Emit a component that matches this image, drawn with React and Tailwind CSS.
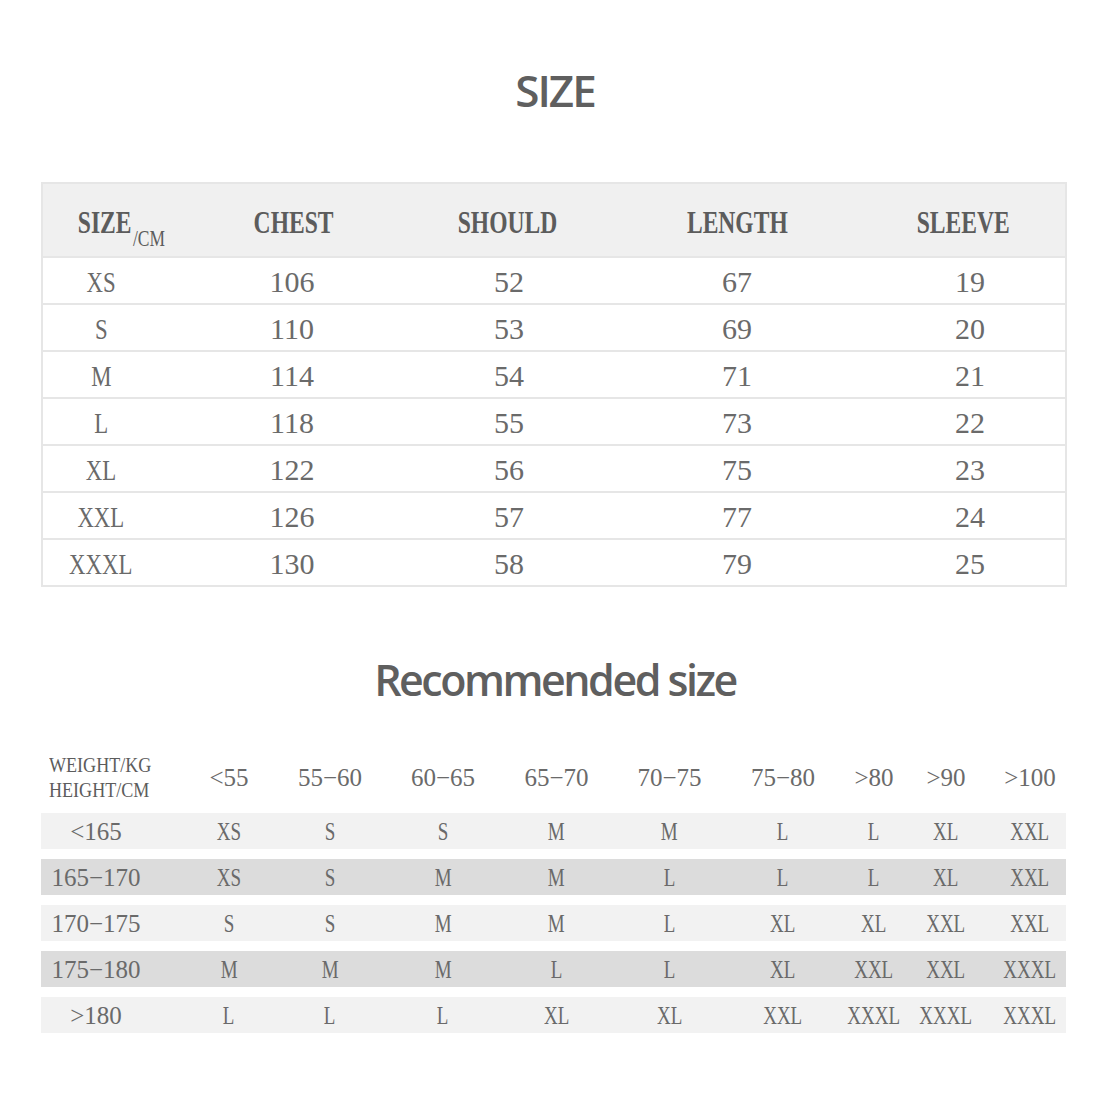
import React from "react";

const sizeRows = [
  ["XS", "106", "52", "67", "19"],
  ["S", "110", "53", "69", "20"],
  ["M", "114", "54", "71", "21"],
  ["L", "118", "55", "73", "22"],
  ["XL", "122", "56", "75", "23"],
  ["XXL", "126", "57", "77", "24"],
  ["XXXL", "130", "58", "79", "25"],
];

const recHeaders = ["<55", "55−60", "60−65", "65−70", "70−75", "75−80", ">80", ">90", ">100"];
const recRows = [
  ["<165", "XS", "S", "S", "M", "M", "L", "L", "XL", "XXL"],
  ["165−170", "XS", "S", "M", "M", "L", "L", "L", "XL", "XXL"],
  ["170−175", "S", "S", "M", "M", "L", "XL", "XL", "XXL", "XXL"],
  ["175−180", "M", "M", "M", "L", "L", "XL", "XXL", "XXL", "XXXL"],
  [">180", "L", "L", "L", "XL", "XL", "XXL", "XXXL", "XXXL", "XXXL"],
];

const t1Cols = "grid-cols-[154px_203px_222px_230px_213px]";
const t1DataPad = ["pr-[38px]", "pr-[13px]", "pr-[4px]", "", "pl-[23px]"];
const t1HeadPad = ["pl-[2px]", "pr-[9px]", "pr-[8px]", "", "pl-[9px]"];
const t2Pad = ["pr-[11px]", "pl-[16px]", "pr-[6px]", "", "", "", "pl-[12px]", "pl-[10px]", "pr-[6px]", "pl-[6px]"];
const t2Cols = "grid-cols-[121px_118px_106px_114px_113px_113px_102px_82px_78px_78px]";

function Letters({ children, className = "" }) {
  return <span className={"inline-block scale-x-[0.76] " + className}>{children}</span>;
}

function Cell({ text }) {
  const isLetters = /[A-Z]/.test(text);
  return isLetters ? <Letters>{text}</Letters> : <span>{text}</span>;
}

export default function App() {
  const serif = { fontFamily: '"Liberation Serif", serif' };
  const sans = { fontFamily: '"Open Sans", "Noto Sans", sans-serif' };
  return (
    <div className="w-[1110px] h-[1110px] bg-white overflow-hidden flex flex-col items-start">
      <h1
        className="self-center mt-[62px] h-[56px] leading-[56px] text-[44px] font-semibold text-[#5f5f5f] tracking-[-2px]"
        style={sans}
      >
        SIZE
      </h1>

      <div className="ml-[41px] mt-[64px] w-[1026px] border-2 border-[#e6e6e6] text-[#6a6a6a]" style={serif}>
        <div className={"grid h-[72px] items-center bg-[#f0f0f0] text-[31px] font-bold text-[#5c5c5c] " + t1Cols}>
          <div className={"text-center pt-[6px] " + t1HeadPad[0]}>
            <Letters>
              SIZE<span className="text-[23px] font-normal relative top-[13px] ml-[2px]">/CM</span>
            </Letters>
          </div>
          {["CHEST", "SHOULD", "LENGTH", "SLEEVE"].map((h, i) => (
            <div key={h} className={"text-center pt-[6px] " + t1HeadPad[i + 1]}>
              <Letters>{h}</Letters>
            </div>
          ))}
        </div>
        {sizeRows.map((row, ri) => (
          <div key={ri} className={"grid h-[47px] items-center border-t-2 border-[#e6e6e6] text-[30px] " + t1Cols}>
            {row.map((c, ci) => (
              <div key={ci} className={"text-center pt-[1px] " + t1DataPad[ci]}>
                <Cell text={c} />
              </div>
            ))}
          </div>
        ))}
      </div>

      <h2
        className="self-center mt-[65px] h-[56px] leading-[56px] text-[43px] font-semibold text-[#5f5f5f] tracking-[-2.5px]"
        style={sans}
      >
        Recommended size
      </h2>

      <div className="ml-[41px] mt-[44px] w-[1025px] text-[#6a6a6a]" style={serif}>
        <div className={"grid h-[51px] items-center text-[25px] " + t2Cols}>
          <div className="flex flex-col items-start pl-[8px] text-[21px] leading-[25px] text-[#5c5c5c]">
            <span className="inline-block origin-left scale-x-[0.86]">WEIGHT/KG</span>
            <span className="inline-block origin-left scale-x-[0.86]">HEIGHT/CM</span>
          </div>
          {recHeaders.map((h, i) => (
            <div key={h} className={"text-center " + t2Pad[i + 1]}>
              {h}
            </div>
          ))}
        </div>
        <div className="mt-[10px] flex flex-col gap-[10px]">
          {recRows.map((row, ri) => (
            <div
              key={ri}
              className={
                "grid h-[36px] items-center text-[25px] " +
                t2Cols +
                (ri % 2 === 1 ? " bg-[#dcdcdc]" : " bg-[#f2f2f2]")
              }
            >
              {row.map((c, ci) => (
                <div key={ci} className={"text-center " + t2Pad[ci]}>
                  <Cell text={c} />
                </div>
              ))}
            </div>
          ))}
        </div>
      </div>
    </div>
  );
}
